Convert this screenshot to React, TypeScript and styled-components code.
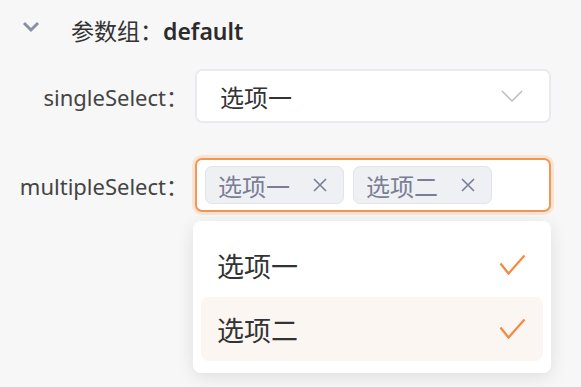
import styled, { createGlobalStyle } from "styled-components";

const GlobalStyle = createGlobalStyle`
  html, body {
    margin: 0;
    padding: 0;
    background: #f7f7f7;
  }
  body {
    font-family: "Noto Sans", "Noto Sans CJK SC", sans-serif;
    color: #333;
  }
`;

const Page = styled.div`
  width: 581px;
  height: 387px;
  padding: 11px 0 0 0;
  box-sizing: border-box;
  overflow: hidden;
`;

const GroupHeader = styled.div`
  display: flex;
  align-items: center;
  height: 38px;
  padding-left: 22px;
`;

const Caret = styled.svg`
  width: 18px;
  height: 12px;
  margin-right: 31px;
  margin-top: -6px;
`;

const GroupTitle = styled.div`
  font-size: 23px;
  color: #333;
  font-family: "Noto Sans CJK SC", sans-serif;

  b {
    font-family: "Noto Sans", "Noto Sans CJK SC", sans-serif;
    font-weight: 600;
    color: #2b2b2b;
  }
`;

const Form = styled.div`
  display: flex;
  flex-direction: column;
  gap: 35px;
  margin-top: 20px;
`;

const Row = styled.div`
  display: grid;
  grid-template-columns: 188px 356px;
  column-gap: 7px;
  align-items: center;
  position: relative;
`;

const Label = styled.label`
  text-align: right;
  font-size: 22px;
  color: #444;
  white-space: nowrap;
`;

const Field = styled.div<{ $focused?: boolean }>`
  height: 54px;
  box-sizing: border-box;
  background: #fff;
  border-radius: 7px;
  border: ${(p) => (p.$focused ? "2px solid #f29658" : "2px solid #e9eaf0")};
  box-shadow: ${(p) => (p.$focused ? "0 0 0 3px #fbe4d4" : "none")};
  display: flex;
  align-items: center;
  padding: ${(p) => (p.$focused ? "0 8px" : "0 26px 0 23px")};
  gap: 9px;
`;

const Value = styled.span`
  flex: 1;
  font-size: 24px;
  color: #333;
  font-family: "Noto Sans CJK SC", sans-serif;
`;

const Tag = styled.span`
  display: inline-flex;
  align-items: center;
  height: 38px;
  box-sizing: border-box;
  padding: 0 16px 0 12px;
  gap: 23px;
  border-radius: 7px;
  background: #eff0f4;
  border: 1px solid #e2e4ea;
  color: #7a7e95;
  font-size: 24px;
  font-family: "Noto Sans CJK SC", sans-serif;
`;

const Menu = styled.div`
  position: absolute;
  top: 63px;
  left: 193px;
  width: 358px;
  box-sizing: border-box;
  background: #fff;
  border-radius: 8px;
  box-shadow: 0 4px 18px rgba(0, 0, 0, 0.1);
  padding: 12px 8px;
  display: flex;
  flex-direction: column;
`;

const Option = styled.div<{ $active?: boolean }>`
  height: 64px;
  display: flex;
  align-items: center;
  justify-content: space-between;
  padding: 0 17px 0 16px;
  border-radius: 8px;
  background: ${(p) => (p.$active ? "#fcf6f2" : "transparent")};
  font-size: 27px;
  color: #333;
  font-family: "Noto Sans CJK SC", sans-serif;
`;

const ChevronDown = () => (
  <svg width="22" height="12" viewBox="0 0 22 12" fill="none">
    <path d="M1 1 L11 11 L21 1" stroke="#bdbdbd" strokeWidth="1.5" />
  </svg>
);

const Close = () => (
  <svg width="14" height="14" viewBox="0 0 14 14" fill="none">
    <path d="M1 1 L13 13 M13 1 L1 13" stroke="#7a7e95" strokeWidth="1.6" />
  </svg>
);

const Check = () => (
  <svg width="27" height="22" viewBox="0 0 27 22" fill="none">
    <path
      d="M1.5 9.5 L9.5 19.5 L25.5 1.5"
      stroke="#f5883d"
      strokeWidth="2.2"
      strokeLinejoin="miter"
    />
  </svg>
);

const options = ["选项一", "选项二"];

export default function App() {
  return (
    <>
      <GlobalStyle />
      <Page>
        <GroupHeader>
          <Caret viewBox="0 0 18 12">
            <path d="M2 2 L9 9 L16 2" stroke="#8b8fa6" strokeWidth="3" fill="none" />
          </Caret>
          <GroupTitle>
            参数组：<b>default</b>
          </GroupTitle>
        </GroupHeader>
        <Form>
          <Row>
            <Label>singleSelect：</Label>
            <Field>
              <Value>选项一</Value>
              <ChevronDown />
            </Field>
          </Row>
          <Row>
            <Label>multipleSelect：</Label>
            <Field $focused>
              {options.map((o) => (
                <Tag key={o}>
                  {o}
                  <Close />
                </Tag>
              ))}
            </Field>
            <Menu>
              {options.map((o, i) => (
                <Option key={o} $active={i === 1}>
                  {o}
                  <Check />
                </Option>
              ))}
            </Menu>
          </Row>
        </Form>
      </Page>
    </>
  );
}
